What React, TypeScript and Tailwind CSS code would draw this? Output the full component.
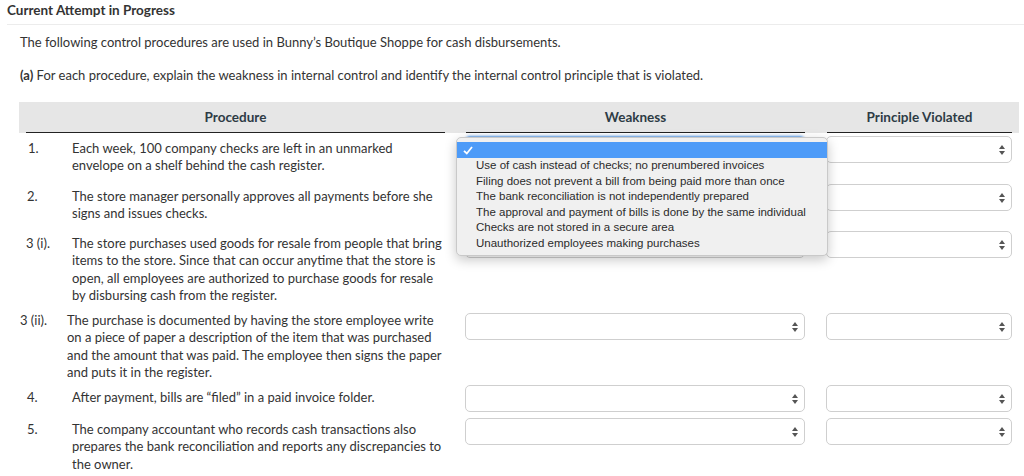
const weaknessOptions = [
  'Use of cash instead of checks; no prenumbered invoices',
  'Filing does not prevent a bill from being paid more than once',
  'The bank reconciliation is not independently prepared',
  'The approval and payment of bills is done by the same individual',
  'Checks are not stored in a secure area',
  'Unauthorized employees making purchases',
];

const rows = [
  {
    num: '1.',
    lines: ['Each week, 100 company checks are left in an unmarked', 'envelope on a shelf behind the cash register.'],
    height: 'h-[48px]',
    pad: 'pl-[28px]',
    numW: 'w-[44px]',
    textTop: 'mt-[3.5px]',
    selTop: 'mt-0',
  },
  {
    num: '2.',
    lines: ['The store manager personally approves all payments before she', 'signs and issues checks.'],
    height: 'h-[47px]',
    pad: 'pl-[27px]',
    numW: 'w-[45px]',
    textTop: 'mt-[3.5px]',
    selTop: 'mt-0',
  },
  {
    num: '3 (i).',
    lines: [
      'The store purchases used goods for resale from people that bring',
      'items to the store. Since that can occur anytime that the store is',
      'open, all employees are authorized to purchase goods for resale',
      'by disbursing cash from the register.',
    ],
    height: 'h-[80.5px]',
    pad: 'pl-[26px]',
    numW: 'w-[46px]',
    textTop: 'mt-[3.5px]',
    selTop: 'mt-0',
  },
  {
    num: '3 (ii).',
    lines: [
      'The purchase is documented by having the store employee write',
      'on a piece of paper a description of the item that was purchased',
      'and the amount that was paid. The employee then signs the paper',
      'and puts it in the register.',
    ],
    height: 'h-[73.5px]',
    pad: 'pl-[20px]',
    numW: 'w-[47px]',
    textTop: 'mt-0',
    selTop: 'mt-[1.5px]',
  },
  {
    num: '4.',
    lines: ['After payment, bills are “filed” in a paid invoice folder.'],
    height: 'h-[33px]',
    pad: 'pl-[27px]',
    numW: 'w-[45px]',
    textTop: 'mt-[3.5px]',
    selTop: 'mt-0',
  },
  {
    num: '5.',
    lines: [
      'The company accountant who records cash transactions also',
      'prepares the bank reconciliation and reports any discrepancies to',
      'the owner.',
    ],
    height: 'h-[60px]',
    pad: 'pl-[27px]',
    numW: 'w-[45px]',
    textTop: 'mt-[2.5px]',
    selTop: 'mt-0',
  },
];

const Arrows = () => (
  <svg width="6" height="10" viewBox="0 0 6 10" className="shrink-0">
    <path d="M3 0 L6 4 L0 4 Z" fill="#555" />
    <path d="M0 6 L6 6 L3 10 Z" fill="#555" />
  </svg>
);

const SelectBox = ({ width, focused }: { width: string; focused?: boolean }) => (
  <div
    className={`flex h-[27px] ${width} shrink-0 items-center justify-end rounded-[5px] border bg-white pr-[6px] ${
      focused ? 'border-[#8ab8ee] shadow-[0_0_2px_1px_#b7d4f7]' : 'border-[#cfcfcf]'
    }`}
  >
    <Arrows />
  </div>
);

const HeaderCell = ({ label, className }: { label: string; className: string }) => (
  <div className={`${className} border-b-[1.5px] border-[#222] pt-[7px] pb-[1px] text-center text-[13.5px] font-bold leading-[16px] text-[#2d3b45]`}>
    {label}
  </div>
);

export default function App() {
  return (
    <div className="relative h-[476px] w-[1024px] overflow-hidden bg-white font-['Lato',sans-serif] text-[#333]">
      <div className="ml-[7px] h-[25px] border-b border-[#ececec] text-[13.5px] font-bold leading-[20px] text-[#333]">
        Current Attempt in Progress
      </div>

      <div className="pl-[20px]">
        <p className="mt-[8px] text-[13px] leading-[18px]">
          The following control procedures are used in Bunny’s Boutique Shoppe for cash disbursements.
        </p>
        <p className="mt-[15px] text-[13px] leading-[18px]">
          <span className="font-bold">(a)</span> For each procedure, explain the weakness in internal control and identify the
          internal control principle that is violated.
        </p>
      </div>

      <div className="mt-[18px] ml-[19px] flex h-[31px] w-[1000px] bg-[#e6e6e6]">
        <HeaderCell label="Procedure" className="ml-[7px] w-[419px]" />
        <HeaderCell label="Weakness" className="ml-[21px] w-[339px]" />
        <HeaderCell label="Principle Violated" className="ml-[22px] w-[185px]" />
      </div>

      <div className="mt-[3px] flex flex-col">
        {rows.map((row, i) => (
          <div key={row.num} className={`flex items-start ${row.height} ${row.pad}`}>
            <div className={`${row.numW} ${row.textTop} shrink-0 text-[13px] leading-[17.5px]`}>{row.num}</div>
            <div className={`${row.textTop} w-[380px] shrink-0 text-[13px] leading-[17.5px]`}>
              {row.lines.map((l) => (
                <div key={l} className="whitespace-nowrap">
                  {l}
                </div>
              ))}
            </div>
            <div className={`${row.selTop} ml-auto flex shrink-0 pr-[12px]`}>
              <SelectBox width="w-[340px]" focused={i === 0} />
              <div className="w-[21px]" />
              <SelectBox width="w-[186px]" />
            </div>
          </div>
        ))}
      </div>

      {/* open native dropdown over the first Weakness select */}
      <div className="absolute top-[137px] left-[456px] w-[372px] rounded-[5px] border border-[#c9c9c9] bg-[#f0f0f0] pt-[4px] pb-[3px] font-['Liberation_Sans',sans-serif] shadow-[0_4px_12px_rgba(0,0,0,0.22)]">
        <div className="flex h-[16px] items-center bg-[#4d9bf8] pl-[6px]">
          <svg width="10" height="9" viewBox="0 0 10 9">
            <path d="M1 4.8 L3.8 7.5 L9 1" fill="none" stroke="#fff" strokeWidth="1.8" />
          </svg>
        </div>
        {weaknessOptions.map((o) => (
          <div key={o} className="pl-[19px] text-[11.5px] leading-[15.6px] whitespace-nowrap text-[#2b2b2b]">
            {o}
          </div>
        ))}
      </div>
    </div>
  );
}
